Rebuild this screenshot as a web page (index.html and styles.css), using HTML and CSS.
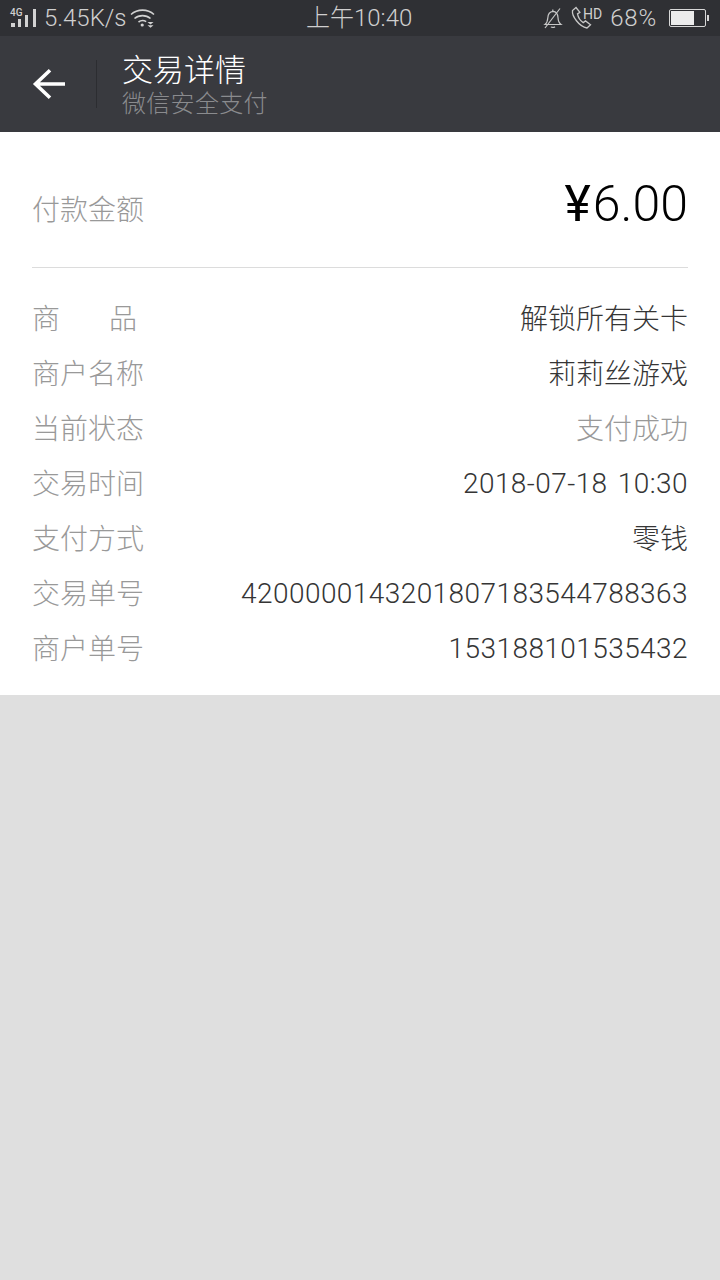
FILE: index.html
```html
<!DOCTYPE html>
<html lang="zh-CN">
<head>
    <meta charset="UTF-8">
    <meta name="viewport" content="width=device-width, initial-scale=1.0">
    <title>交易详情</title>
    <link rel="stylesheet" href="styles.css">
</head>
<body>

    <!-- Barra di stato -->
    <div class="status-bar">
        <div class="status-left">
            <span class="rete">
                <span class="rete-4g">4G</span>
                <svg class="segnale" width="28" height="18" viewBox="0 0 28 18">
                    <path fill="#d2d2d2" d="M1 14h4v4H1zM8 10h3v8H8zM15 6h3v12h-3zM23 0h3v18h-3z"/>
                </svg>
            </span>
            <span class="velocita">5.45K/s</span>
            <svg class="wifi" width="26" height="20" viewBox="0 0 26 20" fill="none" stroke="#d2d2d2" stroke-width="1.6">
                <path d="M1 6.500C7.500 .7 17.500 .7 24 6.500"/>
                <path d="M4.500 10.500C9 6.600 16 6.600 20.500 10.500"/>
                <path d="M8.500 14C10.800 12.300 14 12.300 16.200 13.600"/>
                <circle cx="12.200" cy="17" r="1.600" fill="#d2d2d2" stroke="none"/>
                <path fill="#d2d2d2" stroke="none" d="M17.500 14h6l-3 2.400zM17.500 17.300h6l-3 2.500z"/>
            </svg>
        </div>
        <div class="status-ora">上午10:40</div>
        <div class="status-right">
            <svg class="campana" width="20" height="22" viewBox="0 0 20 22" fill="none" stroke="#c8c8c8" stroke-width="1.2">
                <path d="M2 17.500c2-1.600 2.600-3.200 2.800-6.500.2-3.800 2-6.300 5.200-6.600 3 .3 4.800 2.600 5 6.200.2 3.500 1 5.400 3 6.900z"/>
                <path d="M8 19.700c.6 1 2.800 1 4 0M9.800 4.300V2.500"/>
                <path d="M2 21L17 1.500"/>
            </svg>
            <span class="telefono">
                <svg width="22" height="24" viewBox="0 0 22 24" fill="none" stroke="#c8c8c8" stroke-width="1.3">
                    <path d="M5 1.500L1.500 4.500c-.8 5.500 6.500 16 14.500 17.500l3.500-3.300-5-3.800-2.300 1.700c-2.500-1.500-5-5.200-5.700-8.700L8.900 6.300z"/>
                </svg>
                <span class="hd">HD</span>
            </span>
            <span class="percentuale">68%</span>
            <span class="batteria">
                <span class="batteria-corpo"><span class="batteria-livello"></span></span>
                <span class="batteria-punta"></span>
            </span>
        </div>
    </div>

    <!-- Intestazione -->
    <header class="topbar">
        <svg class="freccia" width="34" height="32" viewBox="0 0 34 32" fill="none" stroke="#fff" stroke-width="3.600">
            <path d="M18 2.200L3.500 16 18 29.800M3.500 16H33"/>
        </svg>
        <div class="topbar-sep"></div>
        <div class="topbar-titoli">
            <div class="titolo">交易详情</div>
            <div class="sottotitolo">微信安全支付</div>
        </div>
    </header>

    <main class="dettaglio">
        <div class="importo">
            <span class="etichetta">付款金额</span>
            <span class="cifra"><span class="yen">¥</span>6.00</span>
        </div>

        <div class="righe">
            <div class="riga">
                <span class="etichetta etichetta-larga"><span>商</span><span>品</span></span>
                <span class="valore">解锁所有关卡</span>
            </div>
            <div class="riga">
                <span class="etichetta">商户名称</span>
                <span class="valore">莉莉丝游戏</span>
            </div>
            <div class="riga">
                <span class="etichetta">当前状态</span>
                <span class="valore valore-grigio">支付成功</span>
            </div>
            <div class="riga">
                <span class="etichetta">交易时间</span>
                <span class="valore valore-num">2018-07-18 10:30</span>
            </div>
            <div class="riga">
                <span class="etichetta">支付方式</span>
                <span class="valore">零钱</span>
            </div>
            <div class="riga">
                <span class="etichetta">交易单号</span>
                <span class="valore valore-num">4200000143201807183544788363</span>
            </div>
            <div class="riga">
                <span class="etichetta">商户单号</span>
                <span class="valore valore-num">153188101535432</span>
            </div>
        </div>
    </main>

</body>
</html>
```

FILE: styles.css
```css
body {
    font-family: Roboto, "Noto Sans CJK SC", sans-serif;
    font-weight: 300;
    background-color: #dfdfdf;
    margin: 0;
    padding: 0;
    height: 1280px;
    overflow: hidden;
}

.status-bar {
    height: 36px;
    background-color: #2f3034;
    color: #cfcfcf;
    display: flex;
    align-items: center;
    justify-content: space-between;
    padding: 0 11px 0 10px;
    position: relative;
    font-size: 24px;
}

.status-left,
.status-right {
    display: flex;
    align-items: center;
}

.rete {
    position: relative;
    width: 28px;
    height: 18px;
    margin-right: 6px;
}

.rete-4g {
    position: absolute;
    top: -1px;
    left: 0;
    font-size: 10px;
    font-weight: 500;
    line-height: 10px;
}

.segnale {
    display: block;
}

.wifi {
    margin-left: 3px;
}

/* Ora centrata sulla barra */
.status-ora {
    position: absolute;
    left: 306px;
    top: 0;
    line-height: 36px;
    white-space: nowrap;
}

.campana {
    margin-right: 8px;
}

.telefono {
    display: flex;
    align-items: flex-start;
    height: 24px;
    margin-right: 8px;
}

.hd {
    font-size: 14px;
    line-height: 16px;
    margin-left: -10px;
    font-weight: 400;
}

.percentuale {
    letter-spacing: 0.8px;
    margin-right: 12px;
}

.batteria {
    display: flex;
    align-items: center;
}

.batteria-corpo {
    width: 33px;
    height: 14px;
    border: 1px solid #d8d8d8;
    border-radius: 2px;
    padding: 1px;
    display: block;
}

.batteria-livello {
    display: block;
    width: 23px;
    height: 14px;
    background-color: #ececec;
}

.batteria-punta {
    width: 2px;
    height: 6px;
    margin-left: 1px;
    background-color: #d8d8d8;
}

.topbar {
    height: 96px;
    background-color: #393a3f;
    display: flex;
    align-items: center;
    padding-left: 32px;
}

.freccia {
    flex-shrink: 0;
}

.topbar-sep {
    width: 1px;
    height: 48px;
    margin: 0 25px 0 30px;
    background-color: #2c2d31;
}

.topbar-titoli {
    padding-top: 3px;
}

.titolo {
    font-size: 31px;
    line-height: 36px;
    color: #fff;
}

.sottotitolo {
    font-size: 24px;
    line-height: 30px;
    letter-spacing: 0.3px;
    color: #8a8b8e;
}

.dettaglio {
    background-color: #fff;
    height: 563px;
    padding: 0 32px;
}

.importo {
    height: 119px;
    padding-top: 16px;
    border-bottom: 1px solid #dcdcdc;
    display: flex;
    justify-content: space-between;
    align-items: center;
}

.cifra {
    font-size: 50px;
    line-height: 60px;
    color: #000;
    margin-bottom: 7px;
}

.yen {
    font-weight: 400;
    margin-right: 2px;
}

.righe {
    padding-top: 21px;
}

.riga {
    height: 55px;
    display: flex;
    align-items: center;
    justify-content: space-between;
    font-size: 28px;
}

.etichetta {
    font-size: 28px;
    color: #999;
}

.etichetta-larga {
    width: 105px;
    display: flex;
    justify-content: space-between;
}

.valore {
    color: #353535;
}

.valore-num {
    letter-spacing: 0.43px;
    word-spacing: 3px;
    padding-top: 4px;
}

.valore-grigio {
    color: #999;
}
```
